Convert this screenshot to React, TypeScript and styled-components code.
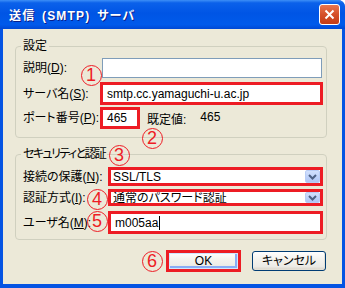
import styled, { createGlobalStyle } from 'styled-components'

const GlobalStyle = createGlobalStyle`
  html, body {
    margin: 0;
    padding: 0;
    background: #ffffff;
  }
  body {
    font-family: "Liberation Sans", "Noto Sans CJK JP", sans-serif;
    font-size: 12px;
    font-feature-settings: "palt";
    color: #000;
  }
`

const Window = styled.div`
  position: relative;
  width: 345px;
  height: 288px;
  display: flex;
  flex-direction: column;
  background: #0554e3;
  border-radius: 0 7px 0 0;
  overflow: hidden;
`

const TitleBar = styled.div`
  flex: none;
  height: 29px;
  display: flex;
  align-items: center;
  padding: 0 5px 0 9px;
  background: linear-gradient(
    to bottom,
    #3d8ff7 0%,
    #0b61ea 10%,
    #0055e5 45%,
    #005aeb 85%,
    #0048d4 100%
  );
`

const Title = styled.span`
  color: #fff;
  font-weight: bold;
  font-size: 12px;
  letter-spacing: 1.2px;
  word-spacing: 2px;
  text-shadow: 1px 1px 0 #0a1d8a;
`

const CloseButton = styled.div`
  margin-left: auto;
  width: 21px;
  height: 21px;
  box-sizing: border-box;
  border: 1px solid #fff;
  border-radius: 3px;
  background: linear-gradient(to bottom, #e9764f 0%, #d5502a 50%, #c43c16 100%);
  display: flex;
  align-items: center;
  justify-content: center;
`

const Body = styled.div`
  flex: 1;
  margin: 0 3px 4px 3px;
  padding: 10px 15px 0 12px;
  background: #ece9d8;
  display: flex;
  flex-direction: column;
`

const Group = styled.fieldset<{ $mt: number; $pb: number }>`
  margin: ${(p) => p.$mt}px 0 0;
  padding: 0 3px ${(p) => p.$pb}px 7px;
  border: 1px solid #d0d0bf;
  border-radius: 4px;
  min-width: 0;
`

const Legend = styled.legend<{ $tight?: boolean }>`
  padding: 0 2px;
  margin-left: -2px;
  line-height: 14px;
  font-size: 12px;
  letter-spacing: ${(p) => (p.$tight ? '-1.6px' : '0')};
`

const Row = styled.div<{ $h: number; $mt: number }>`
  display: flex;
  align-items: center;
  height: ${(p) => p.$h}px;
  margin-top: ${(p) => p.$mt}px;
`

const Label = styled.label<{ $w: number }>`
  flex: none;
  width: ${(p) => p.$w}px;
  white-space: nowrap;
  line-height: 14px;
`

const TextBox = styled.div<{ $marked?: boolean; $w?: number; $pl?: number }>`
  flex: ${(p) => (p.$w ? 'none' : 1)};
  width: ${(p) => (p.$w ? `${p.$w}px` : 'auto')};
  height: 100%;
  box-sizing: border-box;
  margin: ${(p) => (p.$marked ? '0' : '0 1px 0 2px')};
  border: ${(p) => (p.$marked ? '3px solid #ed1c24' : '1px solid #7f9db9')};
  background: #fff;
  display: flex;
  align-items: center;
  padding-left: ${(p) => p.$pl ?? 4}px;
  white-space: nowrap;
  overflow: hidden;
`

const ComboText = styled.span`
  flex: 1;
  line-height: 14px;
`

const ArrowButton = styled.span`
  flex: none;
  width: 15px;
  height: 100%;
  box-sizing: border-box;
  border: 1px solid #b9cdf6;
  border-radius: 2px;
  background: linear-gradient(to bottom, #d2e0fd 0%, #bcd0f9 60%, #afc4f4 100%);
  display: flex;
  align-items: center;
  justify-content: center;
`

const Caret = styled.span`
  display: inline-block;
  width: 1px;
  height: 14px;
  margin-left: 1px;
  background: #000;
  vertical-align: middle;
`

const Default = styled.span`
  margin-left: 7px;
  display: flex;
  gap: 14px;
`

const ButtonRow = styled.div`
  display: flex;
  justify-content: flex-end;
  align-items: center;
  gap: 11px;
  margin-top: 10px;
  padding-right: 1px;
`

const OkFrame = styled.div`
  width: 75px;
  height: 22px;
  box-sizing: border-box;
  border: 3px solid #ed1c24;
  display: flex;
`

const Button = styled.div<{ $default?: boolean; $w?: number }>`
  box-sizing: border-box;
  width: ${(p) => (p.$w ? `${p.$w}px` : '100%')};
  height: ${(p) => (p.$default ? '100%' : '20px')};
  border: ${(p) => (p.$default ? 'none' : '1px solid #003c74')};
  border-radius: ${(p) => (p.$default ? '0' : '3px')};
  background: linear-gradient(to bottom, #ffffff 0%, #f4f3ee 40%, #ecebe6 80%, #d8d2c6 100%);
  box-shadow: ${(p) =>
    p.$default ? 'inset 0 0 0 1px #cee7ff, inset -1px -1px 0 2px #89adf5' : 'inset -1px -1px 0 #e3e0d6'};
  display: flex;
  align-items: center;
  justify-content: center;
  line-height: 14px;
`

const Badge = styled.span<{ $x: number; $y: number }>`
  position: absolute;
  left: ${(p) => p.$x - 10.5}px;
  top: ${(p) => p.$y - 10.5}px;
  width: 21px;
  height: 21px;
  box-sizing: border-box;
  border: 1.5px solid #ee1c25;
  border-radius: 50%;
  color: #ee1c25;
  font-family: "Liberation Sans", Arial, sans-serif;
  font-size: 18px;
  line-height: 18px;
  text-align: center;
`

const Chevron = () => (
  <svg width="9" height="6" viewBox="0 0 9 6">
    <polyline points="1,1 4.5,4.5 8,1" fill="none" stroke="#4d6185" strokeWidth="2" />
  </svg>
)

const badges = [
  { n: 1, x: 91, y: 75 },
  { n: 2, x: 152, y: 138 },
  { n: 3, x: 119, y: 155 },
  { n: 4, x: 97, y: 199 },
  { n: 5, x: 97, y: 221 },
  { n: 6, x: 152, y: 261 },
]

export default function App() {
  return (
    <>
      <GlobalStyle />
      <Window>
        <TitleBar>
          <Title>送信 (SMTP) サーバ</Title>
          <CloseButton>
            <svg width="11" height="11" viewBox="0 0 11 11">
              <path d="M1.5 1.5 L9.5 9.5 M9.5 1.5 L1.5 9.5" stroke="#fff" strokeWidth="2" />
            </svg>
          </CloseButton>
        </TitleBar>
        <Body>
          <Group $mt={0} $pb={8}>
            <Legend>設定</Legend>
            <Row $h={20} $mt={5}>
              <Label $w={77}>
                説明(<u>D</u>):
              </Label>
              <TextBox />
            </Row>
            <Row $h={23} $mt={4}>
              <Label $w={77}>
                サーバ名(<u>S</u>):
              </Label>
              <TextBox $marked>smtp.cc.yamaguchi-u.ac.jp</TextBox>
            </Row>
            <Row $h={22} $mt={2}>
              <Label $w={77}>
                ポート番号(<u>P</u>):
              </Label>
              <TextBox $marked $w={40}>
                465
              </TextBox>
              <Default>
                <span>既定値:</span>
                <span>465</span>
              </Default>
            </Row>
          </Group>
          <Group $mt={9} $pb={5}>
            <Legend $tight>セキュリティと認証</Legend>
            <Row $h={19} $mt={6}>
              <Label $w={85}>
                接続の保護(<u>N</u>):
              </Label>
              <TextBox $marked $pl={2}>
                <ComboText>SSL/TLS</ComboText>
                <ArrowButton>
                  <Chevron />
                </ArrowButton>
              </TextBox>
            </Row>
            <Row $h={17} $mt={3}>
              <Label $w={85}>
                認証方式(<u>I</u>):
              </Label>
              <TextBox $marked $pl={2}>
                <ComboText>通常のパスワード認証</ComboText>
                <ArrowButton>
                  <Chevron />
                </ArrowButton>
              </TextBox>
            </Row>
            <Row $h={23} $mt={5}>
              <Label $w={85}>
                ユーザ名(<u>M</u>):
              </Label>
              <TextBox $marked>
                m005aa
                <Caret />
              </TextBox>
            </Row>
          </Group>
          <ButtonRow>
            <OkFrame>
              <Button $default>OK</Button>
            </OkFrame>
            <Button $w={74}>キャンセル</Button>
          </ButtonRow>
        </Body>
        {badges.map((b) => (
          <Badge key={b.n} $x={b.x} $y={b.y}>
            {b.n}
          </Badge>
        ))}
      </Window>
    </>
  )
}
